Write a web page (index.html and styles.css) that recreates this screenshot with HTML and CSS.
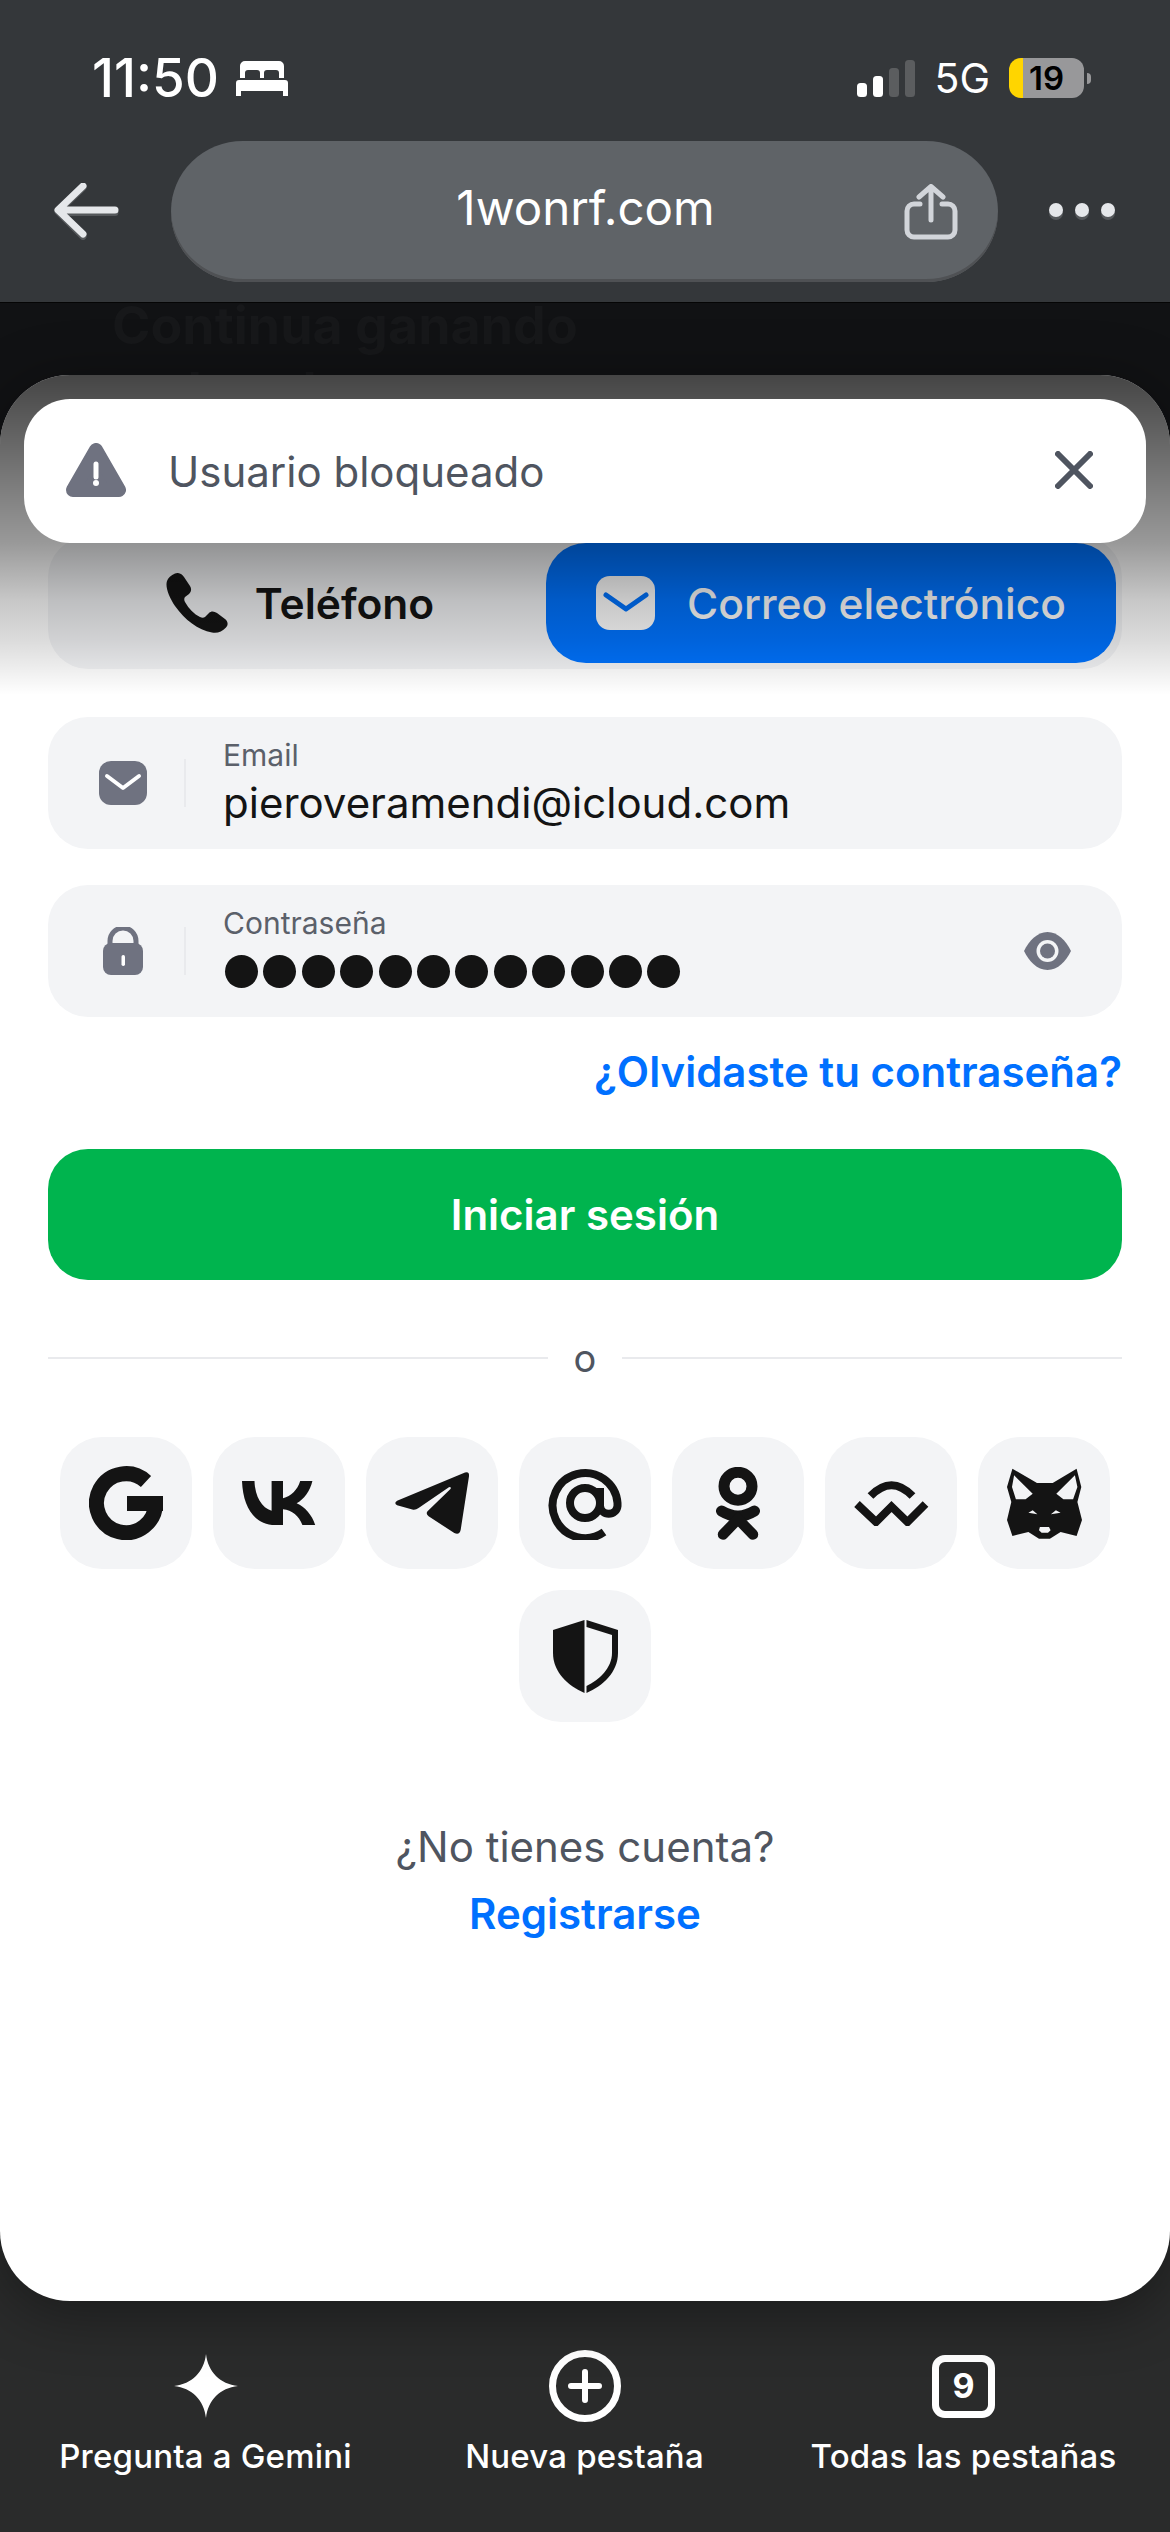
FILE: index.html
```html
<!DOCTYPE html>
<html lang="es">
<head>
<meta charset="utf-8">
<title>1wonrf.com</title>
<link rel="stylesheet" href="styles.css">
</head>
<body>
<div class="app">
  <header class="top">
    <div class="status">
      <div class="status-left">
        <span class="time">11:50</span>
        <svg class="bed" viewBox="0 0 52 35" width="52" height="35"><path fill="#fff" d="M4 5a5 5 0 0 1 5-5h34a5 5 0 0 1 5 5v12h-5v-5a3 3 0 0 0-3-3h-9a3 3 0 0 0-3 3v5h-4v-5a3 3 0 0 0-3-3h-9a3 3 0 0 0-3 3v5H4z"/><path fill="#fff" d="M3 19h46a3 3 0 0 1 3 3v13h-5v-5H5v5H0V22a3 3 0 0 1 3-3z"/></svg>
      </div>
      <div class="status-right">
        <svg class="signal" viewBox="0 0 58 37" width="58" height="37"><rect x="0" y="23" width="10" height="14" rx="3.5" fill="#fff"/><rect x="16" y="16" width="10" height="21" rx="3.5" fill="#fff"/><rect x="32" y="8" width="10" height="29" rx="3.5" fill="#5b5d5f"/><rect x="48" y="0" width="10" height="37" rx="3.5" fill="#5b5d5f"/></svg>
        <span class="net">5G</span>
        <div class="battery">19</div>
      </div>
    </div>
    <nav class="nav">
      <svg class="back" viewBox="0 0 65 57" width="65" height="57"><g fill="none" stroke-width="7" stroke-linecap="round" stroke-linejoin="round"><path stroke="#55585b" d="M61 29.500H6M29 4.500 4 28.500l25 25"/><path stroke="#e5e7ea" d="M61 27H6M29 3 4 27l25 24"/></g></svg>
      <div class="url">
        <span></span>
        <span class="url-text">1wonrf.com</span>
        <svg class="share" viewBox="0 0 54 56" width="54" height="56"><path fill="none" stroke="#d2d5da" stroke-width="5" stroke-linecap="round" stroke-linejoin="round" d="M16 20h-6a7 7 0 0 0-7 7v19a7 7 0 0 0 7 7h34a7 7 0 0 0 7-7V27a7 7 0 0 0-7-7h-6M27 36V3M15 13 27 2.500 39 13"/></svg>
      </div>
      <div class="more"><i></i><i></i><i></i></div>
    </nav>
  </header>

  <main class="stage">
    <div class="ghost">Continua ganando<br>en las slots</div>
    <section class="sheet">
      <div class="shade"></div>
      <div class="toast">
        <svg class="warn" viewBox="0 0 60 54" width="60" height="54"><path fill="#6f7280" stroke="#6f7280" stroke-width="14" stroke-linejoin="round" d="M30 7 53 47H7z"/><path stroke="#fff" stroke-width="5" stroke-linecap="round" d="M30 21v13"/><circle cx="30" cy="40" r="3" fill="#fff"/></svg>
        <span class="toast-text">Usuario bloqueado</span>
        <svg class="close" viewBox="0 0 38 38" width="38" height="38"><path stroke="#4f5560" stroke-width="6" stroke-linecap="round" d="M3 3l32 32M35 3 3 35"/></svg>
      </div>

      <div class="tabs">
        <div class="tab">
          <svg viewBox="0 0 62 60" width="62" height="60"><path fill="#141414" d="M9 .5C13-1 16 1 18 4l6 9c2 3 1 6-1 8l-4 3c-1 1-1 3 0 5 4 7 9 12 15 15 2 1 3.500 1 5 0l4-4c2-2 5-2 8 0l8 6c3 2.500 3.500 6 1 8.500-4 4.500-9 6-14 5-14-2.500-27-12.500-37-26.500C3 24-1 14 1 8c1-3 4-6 8-7.500z"/></svg>
          <span>Teléfono</span>
        </div>
        <div class="tab tab-on">
          <svg viewBox="0 0 59 54" width="59" height="54"><rect width="59" height="54" rx="14" fill="#fff"/><path fill="none" stroke="#0073ff" stroke-width="5" stroke-linecap="round" stroke-linejoin="round" d="m10 19 20 14 20-14"/></svg>
          <span>Correo electrónico</span>
        </div>
      </div>

      <div class="field field-first">
        <div class="field-icon">
          <svg viewBox="0 0 48 44" width="48" height="44"><rect width="48" height="44" rx="12" fill="#6f7280"/><path fill="none" stroke="#fff" stroke-width="4" stroke-linecap="round" stroke-linejoin="round" d="m8 15 16 12 16-12"/></svg>
        </div>
        <div class="field-rule"></div>
        <div class="field-body">
          <div class="field-label">Email</div>
          <div class="field-value">pieroveramendi@icloud.com</div>
        </div>
      </div>

      <div class="field">
        <div class="field-icon">
          <svg viewBox="0 0 40 48" width="40" height="48"><path fill="none" stroke="#6f7280" stroke-width="5" d="M7 20V14a13 13 0 0 1 26 0v6"/><rect y="16" width="40" height="32" rx="8" fill="#6f7280"/><rect x="18.500" y="28" width="3.500" height="11" rx="1.700" fill="#fff"/></svg>
        </div>
        <div class="field-rule"></div>
        <div class="field-body">
          <div class="field-label">Contraseña</div>
          <div class="dots"><i></i><i></i><i></i><i></i><i></i><i></i><i></i><i></i><i></i><i></i><i></i><i></i></div>
        </div>
        <svg class="eye" viewBox="0 0 47 38" width="47" height="38"><path fill="#6f7280" d="M23.500 0C34 0 42 9 47 19 42 29 34 38 23.500 38 13 38 5 29 0 19 5 9 13 0 23.500 0z"/><circle cx="23.500" cy="19" r="11" fill="#f3f4f6"/><circle cx="23.500" cy="19" r="7.500" fill="#6f7280"/></svg>
      </div>

      <a class="forgot">¿Olvidaste tu contraseña?</a>
      <button class="login">Iniciar sesión</button>

      <div class="or"><span></span><b>o</b><span></span></div>

      <div class="social">
        <div class="tile"><svg viewBox="0 0 74 74" width="74" height="74"><path fill="none" stroke="#141414" stroke-width="15" d="M57 15.500A29.500 29.500 0 1 0 66.500 37"/><rect x="38" y="30" width="36" height="15" fill="#141414"/></svg></div>
        <div class="tile"><svg viewBox="0 0 74 44" width="74" height="44"><path fill="#141414" d="M0 0h12.500C13 16 20 27 29.600 29.700V0H41v17.300C49 15 55.500 9 58.200 0h12.200C68 10 62 18.500 54.600 22.300 63 26 70 34 73.200 44H60.400C57 35 50 29 41 28.300V44h-7.800C13 44 1 27 0 0z"/></svg></div>
        <div class="tile"><svg viewBox="0 0 75 62" width="75" height="62"><path fill="#141414" d="M70 .5Q74.500-1 74 4.300L65.700 57.700Q64.500 63.500 59.300 61L33.600 44.300Q30.500 42 32.500 39.300L55.700 16.700Q56 14 53.900 15.300L23.600 36Q21 38 18.200 37.700L2.100 33.300Q-1.500 31 2.100 28.700z"/></svg></div>
        <div class="tile"><svg viewBox="0 0 74 74" width="74" height="74"><g fill="none" stroke="#141414" stroke-width="8"><circle cx="37" cy="37" r="15"/><path d="M56 66A32.500 32.500 0 1 1 69.500 37v3a8.800 8.800 0 0 1-17.500 0V22"/></g></svg></div>
        <div class="tile"><svg viewBox="0 0 44 73" width="44" height="73"><g fill="none" stroke="#141414"><circle cx="22" cy="19.300" r="14" stroke-width="11"/><path stroke-width="11" stroke-linecap="round" d="M5.500 44Q22 54 38.500 44"/><path stroke-width="10.500" stroke-linecap="round" d="M7 67.500 22 52l15 15.500"/></g></svg></div>
        <div class="tile"><svg viewBox="0 0 75 45" width="75" height="45"><g fill="none" stroke="#141414" stroke-width="8"><path d="M16.500 15Q37.500-6.600 58.500 15"/><path d="m3 23 19 18 15.500-15.500L53.500 41l18-18"/></g></svg></div>
        <div class="tile"><svg viewBox="0 0 75 71" width="75" height="71"><path fill="#141414" d="M5.400.7 30 15h15.700L69.600.7 74.300 19l-3.900 15L75 52l-5.400 16-16-4-10.700 6.700H32L21.400 64 5.400 68 0 52l4.300-18L0 19z"/><path fill="#f3f4f6" d="M7.100 7.300 25.700 25.700l-7.100 5.600H8.900L5 19zM67.900 7.300 49.300 25.700l7.100 5.600h9.700L70.400 19zM21.400 44.700l4.300-2.400 4.700 4zM53.600 44.700l-4.700-2.400-5 4zM32.900 59H42l1.600 3.300-2.600 2.400h-6.400L32 62.300z"/></svg></div>
        <div class="tile"><svg viewBox="0 0 65 73" width="65" height="73"><path fill="#141414" d="M31.500 0 0 10v23c0 19 15 33 31.500 40z"/><path fill="#141414" d="M33.500 0 65 10v23c0 19-15 33-31.500 40v-7C46 60 59 48 59 33V15L33.500 7z"/></svg></div>
      </div>

      <p class="ask">¿No tienes cuenta?</p>
      <a class="register">Registrarse</a>
    </section>
  </main>

  <footer class="bottom">
    <div class="action">
      <div class="action-icon"><svg viewBox="0 0 64 64" width="64" height="64"><path fill="#fff" d="M32 0C34 18 46 30 64 32 46 34 34 46 32 64 30 46 18 34 0 32 18 30 30 18 32 0z"/></svg></div>
      <span>Pregunta a Gemini</span>
    </div>
    <div class="action">
      <div class="action-icon"><svg viewBox="0 0 72 72" width="72" height="72"><g fill="none" stroke="#fff"><circle cx="36" cy="36" r="32.500" stroke-width="7"/><path stroke-width="6" stroke-linecap="round" d="M36 22v28M22 36h28"/></g></svg></div>
      <span>Nueva pestaña</span>
    </div>
    <div class="action">
      <div class="action-icon"><div class="tabs-count">9</div></div>
      <span>Todas las pestañas</span>
    </div>
  </footer>
</div>
</body>
</html>
```

FILE: styles.css
```css
* { box-sizing: border-box; }
html, body { margin: 0; padding: 0; }
body { font-family: Inter, "Liberation Sans", sans-serif; color: #141414; }

.app { width: 1170px; height: 2532px; display: flex; flex-direction: column; background: #2a2b2b; overflow: hidden; }

/* browser chrome */
.top { height: 303px; background: #34373a; border-bottom: 1px solid #050505; }
.status { height: 141px; padding: 58px 79px 0 92px; display: flex; justify-content: space-between; align-items: flex-start; }
.status-left, .status-right { height: 40px; display: flex; align-items: center; }
.status-left { gap: 17px; }
.status-right { gap: 19px; }
.time { font-size: 53px; font-weight: 500; color: #fff; line-height: 40px; letter-spacing: 0; }
.net { font-size: 41px; font-weight: 400; color: #fff; line-height: 40px; }
.battery { position: relative; width: 75px; height: 40px; border-radius: 12px; background: linear-gradient(90deg, #ffd500 14px, #98989a 14px); color: #000; font-size: 33px; font-weight: 600; line-height: 40px; text-align: center; margin-right: 7px; }
.battery::after { content: ""; position: absolute; left: 78px; top: 15px; width: 4px; height: 11px; border-radius: 0 6px 6px 0; background: #98989a; }

.nav { height: 141px; padding-left: 54px; display: flex; align-items: center; }
.back { margin-right: 52px; }
.url { width: 827px; height: 141px; border-radius: 72px / 70px; background: #5f6367; box-shadow: inset 0 -3px 0 #4f5154; padding: 0 40px; display: grid; grid-template-columns: 1fr auto 1fr; align-items: center; }
.url-text { font-size: 47.5px; color: #fff; margin: -8px 0 0 2px; }
.share { justify-self: end; margin-top: 0; }
.more { margin-left: 51px; margin-top: -3px; display: flex; gap: 12px; }
.more i { width: 14px; height: 14px; border-radius: 50%; background: #e5e7ea; box-shadow: 0 3px 0 #55585b; }

/* page */
.stage { height: 1998px; padding-top: 72px; position: relative; background: linear-gradient(#111214 1000px, transparent 1000px); }
.ghost { position: absolute; left: 112px; top: -10px; font-size: 52px; line-height: 66px; font-weight: 700; color: #17181a; }
.sheet { position: relative; height: 1926px; padding: 162px 48px 0; background: #fff; border-radius: 70px; overflow: hidden; display: flex; flex-direction: column; }
.stage .sheet { box-shadow: 0 10px 60px rgba(0,0,0,.4); }
.shade { position: absolute; left: 0; right: 0; top: 0; height: 320px; z-index: 1; background: linear-gradient(rgba(0,0,0,.73) 0, rgba(0,0,0,.40) 168px, rgba(0,0,0,.22) 225px, rgba(0,0,0,.14) 265px, rgba(0,0,0,.07) 293px, rgba(0,0,0,0) 320px); }

.toast { position: absolute; z-index: 2; left: 24px; right: 24px; top: 24px; height: 144px; border-radius: 46px; background: #fff; display: flex; align-items: center; padding: 0 53px 0 42px; }
.warn { margin-right: 42px; margin-top: -3px; }
.toast-text { flex: 1; font-size: 42px; color: #4f5560; }
.close { margin-top: -2px; }

.tabs { height: 132px; flex: none; border-radius: 40px; background: #f3f4f6; padding: 6px; display: flex; }
.tab { width: 492px; display: flex; align-items: center; justify-content: center; gap: 27px; font-size: 42.5px; font-weight: 600; color: #141414; }
.tab-on { width: 570px; gap: 32px; border-radius: 40px; background: #0073ff; color: #fff; font-size: 42.5px; font-weight: 500; }

.field { height: 132px; flex: none; border-radius: 40px; background: #f3f4f6; display: flex; align-items: center; padding: 0 51px; margin-top: 36px; }
.field-first { margin-top: 48px; }
.field-icon { width: 48px; display: flex; justify-content: center; margin-right: 37px; }
.field-rule { width: 2px; height: 48px; background: #e9eaed; margin-right: 37px; }
.field-body { flex: 1; align-self: flex-start; padding-top: 20px; }
.field-label { font-size: 30px; line-height: 36px; color: #5b606a; }
.field-value { font-size: 42px; line-height: 52px; margin-top: 4px; color: #141414; }
.dots { display: flex; gap: 5.4px; margin-top: 14px; padding-left: 2px; }
.dots i { width: 33px; height: 33px; border-radius: 50%; background: #141414; }

.forgot { margin-top: 30px; line-height: 50px; text-align: right; font-size: 42px; font-weight: 600; color: #0070ff; }
.login { height: 131px; flex: none; margin-top: 52px; border: 0; border-radius: 40px; background: #00b44e; color: #fff; font-family: inherit; font-size: 42px; font-weight: 600; }

.or { margin-top: 58px; height: 40px; flex: none; display: flex; align-items: center; gap: 22px; }
.or span { flex: 1; height: 2px; background: #e9eaed; }
.or b { width: 30px; text-align: center; font-size: 38px; font-weight: 400; color: #4f5560; }

.social { margin-top: 59px; display: flex; flex-wrap: wrap; justify-content: center; gap: 21px; }
.tile { width: 132px; height: 132px; border-radius: 42px; background: #f3f4f6; display: flex; align-items: center; justify-content: center; }

.ask { margin: 100px 0 0; line-height: 50px; text-align: center; font-size: 42px; color: #4f5560; }
.register { margin-top: 17px; line-height: 50px; text-align: center; font-size: 42px; font-weight: 600; color: #0070ff; }

/* bottom toolbar */
.bottom { flex: 1; padding: 49px 17px 0 16px; display: grid; grid-template-columns: repeat(3, 1fr); align-items: start; color: #fff; }
.action { display: flex; flex-direction: column; align-items: center; font-size: 33px; line-height: 40px; letter-spacing: 0.2px; font-weight: 500; }
.action-icon { height: 72px; display: flex; align-items: center; justify-content: center; margin-bottom: 14px; }
.tabs-count { width: 63px; height: 63px; border: 7px solid #fff; border-radius: 13px; display: flex; align-items: center; justify-content: center; font-size: 34px; font-weight: 700; letter-spacing: 0; }
```
